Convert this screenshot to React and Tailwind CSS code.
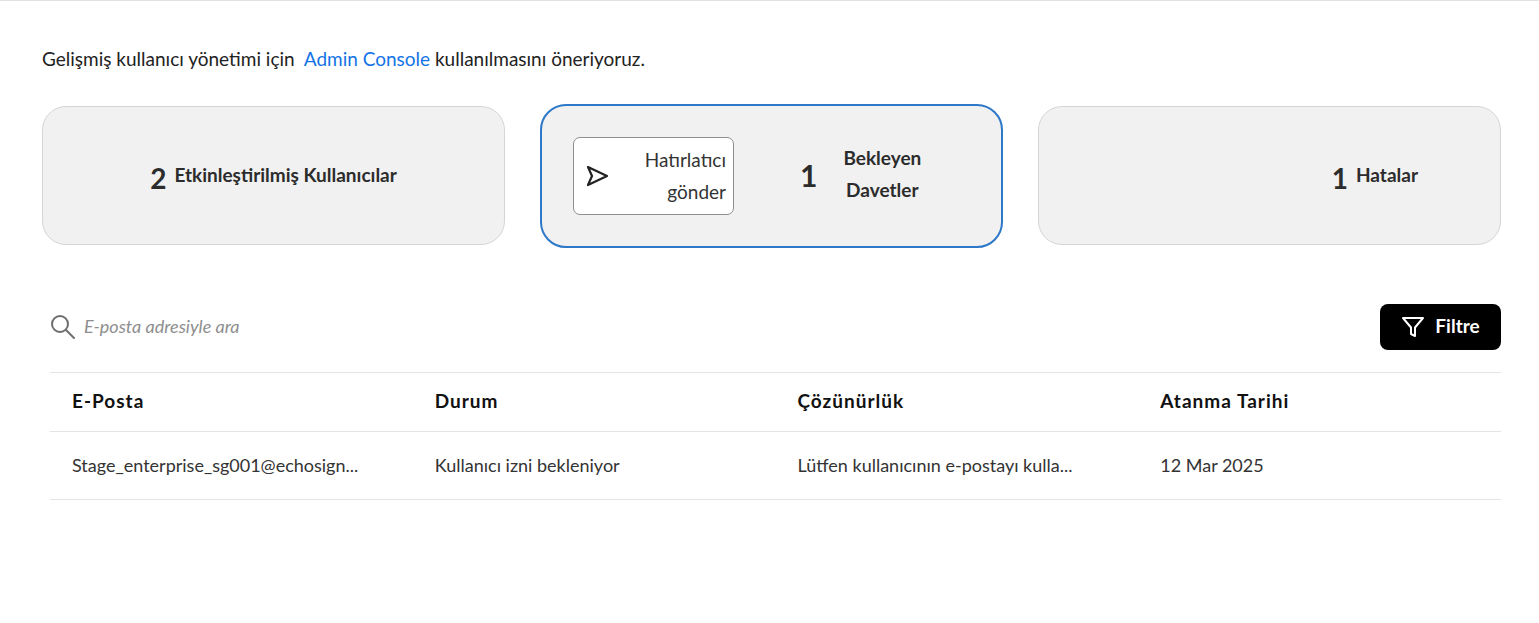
import React from "react";

const cols = ["E-Posta", "Durum", "Çözünürlük", "Atanma Tarihi"];
const row = ["Stage_enterprise_sg001@echosign...", "Kullanıcı izni bekleniyor", "Lütfen kullanıcının e-postayı kulla...", "12 Mar 2025"];

export default function App() {
  return (
    <div className="w-[1539px] h-[623px] bg-white border-t border-[#e1e1e1] text-[#222]" style={{ fontFamily: "Lato, 'Open Sans', sans-serif" }}>
      <div className="pl-[42px] pr-[38px]">
        <p className="pt-[44px] text-[19px] text-[#222]">
          Gelişmiş kullanıcı yönetimi için&nbsp; <span className="text-[#1473e6]">Admin Console</span> kullanılmasını öneriyoruz.
        </p>

        <div className="mt-[30px] grid grid-cols-3 gap-[35px] items-center">
          <div className="h-[139px] rounded-[24px] bg-[#f1f1f1] border border-[#d5d5d5] flex items-center justify-center gap-2">
            <span className="text-[28px] font-bold text-[#2c2c2c] mt-1">2</span>
            <span className="text-[19px] font-bold text-[#2c2c2c]">Etkinleştirilmiş Kullanıcılar</span>
          </div>
          <div className="h-[144px] rounded-[26px] bg-[#f1f1f1] border-2 border-[#2d78c8] flex items-center pl-[31px]">
            <button className="w-[161px] h-[78px] bg-white border border-[#8e8e8e] rounded-[7px] flex items-center justify-between pl-[12px] pr-[7px]">
              <svg width="24" height="22" viewBox="0 0 24 22" fill="none" stroke="#222" strokeWidth="2.2" strokeLinejoin="round">
                <path d="M2 2 L21 11 L2 20 L6 11 Z" />
              </svg>
              <span className="text-[19px] leading-[32px] text-right text-[#333]">Hatırlatıcı<br />gönder</span>
            </button>
            <span className="ml-[66px] text-[30px] font-bold text-[#2c2c2c]">1</span>
            <span className="ml-[26px] text-[19px] font-bold text-[#2c2c2c] leading-[32px] text-center -mt-[4px]">Bekleyen<br />Davetler</span>
          </div>
          <div className="h-[139px] rounded-[24px] bg-[#f1f1f1] border border-[#d5d5d5] flex items-center justify-end pr-[82px] gap-2">
            <span className="text-[28px] font-bold text-[#2c2c2c] mt-1">1</span>
            <span className="text-[19px] font-bold text-[#2c2c2c]">Hatalar</span>
          </div>
        </div>

        <div className="mt-[56px] ml-[8px] flex items-center justify-between">
          <div className="flex items-center gap-[8px]">
            <svg width="26" height="26" viewBox="0 0 26 26" fill="none" stroke="#6e6e6e" strokeWidth="2" strokeLinecap="round">
              <circle cx="10" cy="10" r="8" />
              <path d="M16 16 L24 24" />
            </svg>
            <span className="text-[18px] italic text-[#8e8e8e]">E-posta adresiyle ara</span>
          </div>
          <button className="bg-black text-white rounded-[8px] h-[46px] w-[121px] flex items-center justify-center gap-[10px] text-[19px] font-bold">
            <svg width="24" height="24" viewBox="0 0 24 24" fill="none" stroke="white" strokeWidth="2" strokeLinejoin="round">
              <path d="M2 3 H22 L14 12.5 V21 L10 19 V12.5 Z" />
            </svg>
            Filtre
          </button>
        </div>

        <div className="mt-[22px] ml-[8px]">
          <div className="grid grid-cols-4 border-t border-b border-[#e4e4e4] h-[60px] items-center">
            {cols.map((c) => (
              <div key={c} className="pl-[22px] text-[19px] font-bold tracking-[1px] text-[#111]">{c}</div>
            ))}
          </div>
          <div className="grid grid-cols-4 border-b border-[#e4e4e4] h-[68px] items-center">
            {row.map((c) => (
              <div key={c} className="pl-[22px] text-[18px] text-[#333] whitespace-nowrap">{c}</div>
            ))}
          </div>
        </div>
      </div>
    </div>
  );
}
